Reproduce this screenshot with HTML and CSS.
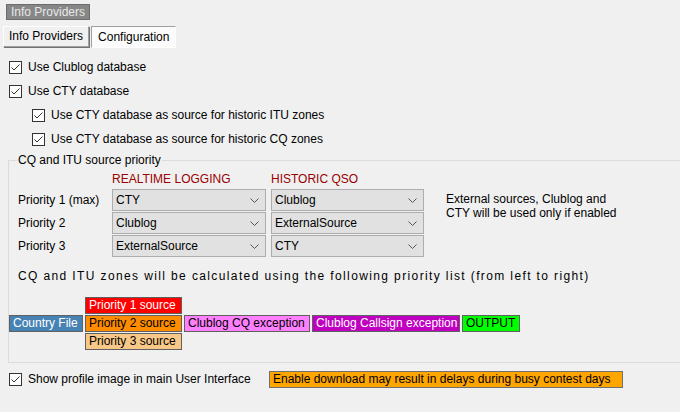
FILE: index.html
```html
<!DOCTYPE html>
<html>
<head>
<meta charset="utf-8">
<link rel="stylesheet" href="styles.css">
</head>
<body>
<div class="title">Info Providers</div>
<div class="tabs">
  <div class="tab">Info Providers</div>
  <div class="tab tab-active">Configuration</div>
</div>

<div class="check-row">
  <span class="cb"><svg width="11" height="11" viewBox="0 0 11 11"><polyline points="1.5,5.5 4,8 9.5,2.5" fill="none" stroke="#333" stroke-width="1"/></svg></span>
  <span>Use Clublog database</span>
</div>
<div class="check-row">
  <span class="cb"><svg width="11" height="11" viewBox="0 0 11 11"><polyline points="1.5,5.5 4,8 9.5,2.5" fill="none" stroke="#333" stroke-width="1"/></svg></span>
  <span>Use CTY database</span>
</div>
<div class="check-row sub">
  <span class="cb"><svg width="11" height="11" viewBox="0 0 11 11"><polyline points="1.5,5.5 4,8 9.5,2.5" fill="none" stroke="#333" stroke-width="1"/></svg></span>
  <span>Use CTY database as source for historic ITU zones</span>
</div>
<div class="check-row sub">
  <span class="cb"><svg width="11" height="11" viewBox="0 0 11 11"><polyline points="1.5,5.5 4,8 9.5,2.5" fill="none" stroke="#333" stroke-width="1"/></svg></span>
  <span>Use CTY database as source for historic CQ zones</span>
</div>

<fieldset class="group">
  <legend>CQ and ITU source priority</legend>
  <div class="prio-grid">
    <div></div>
    <div class="col-head">REALTIME LOGGING</div>
    <div class="col-head">HISTORIC QSO</div>
    <div></div>

    <div class="prio-label">Priority 1 (max)</div>
    <div class="combo"><span>CTY</span><svg class="chev" width="9" height="5" viewBox="0 0 9 5"><polyline points="0.5,0.5 4.5,4.5 8.5,0.5" fill="none" stroke="#555" stroke-width="1"/></svg></div>
    <div class="combo"><span>Clublog</span><svg class="chev" width="9" height="5" viewBox="0 0 9 5"><polyline points="0.5,0.5 4.5,4.5 8.5,0.5" fill="none" stroke="#555" stroke-width="1"/></svg></div>

    <div class="prio-label">Priority 2</div>
    <div class="combo"><span>Clublog</span><svg class="chev" width="9" height="5" viewBox="0 0 9 5"><polyline points="0.5,0.5 4.5,4.5 8.5,0.5" fill="none" stroke="#555" stroke-width="1"/></svg></div>
    <div class="combo"><span>ExternalSource</span><svg class="chev" width="9" height="5" viewBox="0 0 9 5"><polyline points="0.5,0.5 4.5,4.5 8.5,0.5" fill="none" stroke="#555" stroke-width="1"/></svg></div>

    <div class="prio-label">Priority 3</div>
    <div class="combo"><span>ExternalSource</span><svg class="chev" width="9" height="5" viewBox="0 0 9 5"><polyline points="0.5,0.5 4.5,4.5 8.5,0.5" fill="none" stroke="#555" stroke-width="1"/></svg></div>
    <div class="combo"><span>CTY</span><svg class="chev" width="9" height="5" viewBox="0 0 9 5"><polyline points="0.5,0.5 4.5,4.5 8.5,0.5" fill="none" stroke="#555" stroke-width="1"/></svg></div>

    <div class="note">External sources, Clublog and<br>CTY will be used only if enabled</div>
  </div>

  <div class="calc-text">CQ and ITU zones will be calculated using the following priority list (from left to right)</div>

  <div class="chain">
    <div class="box b-country">Country File</div>
    <div class="stack">
      <div class="box b-p1">Priority 1 source</div>
      <div class="box b-p2">Priority 2 source</div>
      <div class="box b-p3">Priority 3 source</div>
    </div>
    <div class="box b-cq">Clublog CQ exception</div>
    <div class="box b-call">Clublog Callsign exception</div>
    <div class="box b-out">OUTPUT</div>
  </div>
</fieldset>

<div class="bottom-row">
  <span class="cb"><svg width="11" height="11" viewBox="0 0 11 11"><polyline points="1.5,5.5 4,8 9.5,2.5" fill="none" stroke="#333" stroke-width="1"/></svg></span>
  <span class="bottom-label">Show profile image in main User Interface</span>
  <span class="warn">Enable download may result in delays during busy contest days</span>
</div>
</body>
</html>
```

FILE: styles.css
```css
html, body {
  margin: 0;
  padding: 0;
}
body {
  background: #f0f0f0;
  font-family: "Liberation Sans", Arial, sans-serif;
  font-size: 12px;
  color: #000;
  width: 680px;
  height: 412px;
  overflow: hidden;
}
.title {
  display: inline-block;
  margin: 4px 0 0 6px;
  height: 14px;
  line-height: 14px;
  padding: 0 4px;
  background: #878787;
  border: 1px solid #6b6b6b;
  color: #e8e8e8;
}
.tabs {
  display: flex;
  margin: 6px 0 0 3px;
  gap: 2px;
  align-items: flex-start;
}
.tab {
  height: 19px;
  line-height: 19px;
  padding: 0 5px;
  white-space: nowrap;
  border: 1px solid;
  border-color: #fff #a0a0a0 #a0a0a0 #fff;
  box-shadow: 1px 1px 0 #707070;
  background: #f0f0f0;
}
.tab-active {
  height: 20px;
  line-height: 21px;
  background: #fbfbfb;
  border-color: #a0a0a0 #fff #fff #a0a0a0;
  box-shadow: none;
  padding: 0 6px;
}
.check-row {
  display: flex;
  align-items: center;
  height: 24px;
  padding-left: 9px;
  gap: 6px;
}
.tabs + .check-row {
  margin-top: 7px;
}
.check-row.sub {
  padding-left: 32px;
}
.cb {
  display: inline-flex;
  align-items: center;
  justify-content: center;
  width: 11px;
  height: 11px;
  border: 1px solid #333;
  background: #fff;
  flex: none;
}
.cb svg {
  display: block;
}
.group {
  margin: 2px -20px 0 8px;
  padding: 0 0 12px 0;
  border: 1px solid #dcdcdc;
  min-width: 0;
}
.group legend {
  margin-left: 8px;
  padding: 0 1px;
  line-height: 14px;
}
.prio-grid {
  display: grid;
  grid-template-columns: 89px 154px 153px auto;
  grid-template-rows: 17px 22px 22px 22px;
  column-gap: 5px;
  row-gap: 1px;
  margin: 4px 0 0 9px;
}
.col-head {
  color: #990000;
  line-height: 16px;
}
.prio-label {
  line-height: 22px;
  white-space: nowrap;
}
.combo {
  display: flex;
  align-items: center;
  justify-content: space-between;
  border: 1px solid #adadad;
  background: #e1e1e1;
  padding: 0 6px 0 3px;
  box-sizing: border-box;
  height: 22px;
}
.chev {
  display: block;
}
.note {
  grid-column: 4;
  grid-row: 2 / span 2;
  padding-left: 17px;
  line-height: 14px;
  padding-top: 3px;
  white-space: nowrap;
}
.calc-text {
  margin: 11px 0 0 9px;
  line-height: 16px;
  letter-spacing: 1.38px;
  white-space: nowrap;
}
.chain {
  display: flex;
  align-items: center;
  gap: 2px;
  margin-top: 13px;
}
.stack {
  display: flex;
  flex-direction: column;
  gap: 1px;
}
.box {
  box-sizing: border-box;
  height: 17px;
  line-height: 15px;
  border: 1px solid #606060;
  padding: 0 3px;
  white-space: nowrap;
}
.b-country { background: #4682b4; color: #fff; width: 74px; }
.b-p1 { background: #ff0000; color: #fff; width: 97px; }
.b-p2 { background: #ff8c00; width: 97px; }
.b-p3 { background: #f8c888; width: 97px; }
.b-cq { background: #ff80ff; width: 126px; }
.b-call { background: #c000c0; color: #fff; width: 148px; }
.b-out { background: #00ff00; width: 58px; }
.bottom-row {
  display: flex;
  align-items: center;
  height: 18px;
  margin-top: 7px;
  padding-left: 9px;
}
.bottom-label {
  margin-left: 6px;
  width: 241px;
  flex: none;
}
.warn {
  box-sizing: border-box;
  height: 17px;
  line-height: 15px;
  width: 354px;
  background: #ffa500;
  border: 1px solid #707070;
  padding: 0 3px;
  white-space: nowrap;
}
```
